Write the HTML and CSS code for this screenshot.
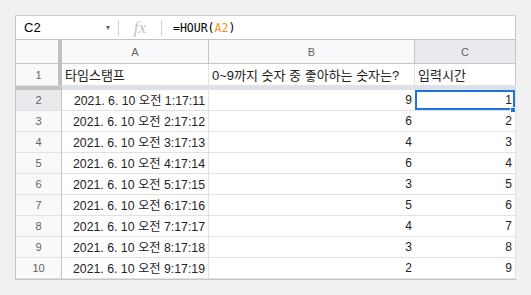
FILE: index.html
```html
<!DOCTYPE html>
<html lang="ko">
<head>
<meta charset="utf-8">
<link rel="stylesheet" href="styles.css">
</head>
<body>
<div class="sheet">
  <div class="fbar">
    <div class="namebox"><span class="ref">C2</span><span class="arrow">▾</span></div>
    <div class="sep"></div>
    <div class="fx">fx</div>
    <div class="sep"></div>
    <div class="formula">=HOUR(<span class="argref">A2</span>)</div>
  </div>
  <div class="grid">
    <div class="corner"></div>
    <div class="colh">A</div>
    <div class="colh">B</div>
    <div class="colh sel">C</div>

    <div class="rowh frozen">1</div>
    <div class="cell hdr">타임스탬프</div>
    <div class="cell hdr">0~9까지 숫자 중 좋아하는 숫자는?</div>
    <div class="cell hdr">입력시간</div>

    <div class="band"></div>

    <div class="rowh sel">2</div>
    <div class="cell num date">2021. 6. 10 오전 1:17:11</div>
    <div class="cell num">9</div>
    <div class="cell num active">1<span class="handle"></span></div>

    <div class="rowh">3</div>
    <div class="cell num date">2021. 6. 10 오전 2:17:12</div>
    <div class="cell num">6</div>
    <div class="cell num">2</div>

    <div class="rowh">4</div>
    <div class="cell num date">2021. 6. 10 오전 3:17:13</div>
    <div class="cell num">4</div>
    <div class="cell num">3</div>

    <div class="rowh">5</div>
    <div class="cell num date">2021. 6. 10 오전 4:17:14</div>
    <div class="cell num">6</div>
    <div class="cell num">4</div>

    <div class="rowh">6</div>
    <div class="cell num date">2021. 6. 10 오전 5:17:15</div>
    <div class="cell num">3</div>
    <div class="cell num">5</div>

    <div class="rowh">7</div>
    <div class="cell num date">2021. 6. 10 오전 6:17:16</div>
    <div class="cell num">5</div>
    <div class="cell num">6</div>

    <div class="rowh">8</div>
    <div class="cell num date">2021. 6. 10 오전 7:17:17</div>
    <div class="cell num">4</div>
    <div class="cell num">7</div>

    <div class="rowh">9</div>
    <div class="cell num date">2021. 6. 10 오전 8:17:18</div>
    <div class="cell num">3</div>
    <div class="cell num">8</div>

    <div class="rowh">10</div>
    <div class="cell num date">2021. 6. 10 오전 9:17:19</div>
    <div class="cell num">2</div>
    <div class="cell num">9</div>
  </div>
</div>
</body>
</html>
```

FILE: styles.css
```css
* { box-sizing: border-box; }
html, body { margin: 0; padding: 0; }
body {
  background: #f1f1f1;
  padding: 15px 0 0 15px;
  font-family: "Liberation Sans", "Noto Sans CJK KR", Arial, sans-serif;
  color: #222;
}
.sheet {
  width: 501px;
  background: #fff;
  border: 1px solid #c4c4c4;
  border-top-color: #d0d0d0;
}
.fbar {
  height: 24px;
  display: flex;
  align-items: center;
  border-bottom: 1px solid #c4c4c4;
}
.namebox {
  width: 102px;
  display: flex;
  align-items: center;
  justify-content: space-between;
  padding: 0 8px 0 8px;
  font-size: 13px;
  color: #000;
}
.arrow { font-size: 8px; color: #666; }
.sep { width: 1px; height: 16px; background: #d4d4d4; }
.fx {
  width: 42px;
  text-align: center;
  font-family: "Liberation Serif", serif;
  font-style: italic;
  font-size: 17px;
  color: #c2c2c2;
  line-height: 22px;
}
.formula {
  padding-left: 11px;
  font-family: "DejaVu Sans Mono", monospace;
  font-size: 11.5px;
  color: #000;
}
.argref { color: #f4931e; }
.grid {
  display: grid;
  grid-template-columns: 46px 147px 206px 101px;
  grid-template-rows: 24px 22px 4px repeat(9, 21px);
}
.corner {
  background: #f8f9fa;
  border-right: 4px solid #c0c0c0;
  border-bottom: 1px solid #c4c4c4;
}
.colh {
  background: #f8f9fa;
  border-right: 1px solid #c4c4c4;
  border-bottom: 1px solid #c4c4c4;
  font-size: 11px;
  color: #5f6368;
  display: flex;
  align-items: center;
  justify-content: center;
}
.colh:last-of-type { border-right: none; }
.colh.sel, .rowh.sel { background: #e8eaed; }
.rowh {
  background: #f8f9fa;
  border-right: 1px solid #c4c4c4;
  border-bottom: 1px solid #e2e2e2;
  font-size: 11px;
  color: #5f6368;
  display: flex;
  align-items: center;
  justify-content: center;
}
.rowh.frozen { border-right: 4px solid #c0c0c0; padding-left: 3px; }
.band {
  grid-column: 1 / -1;
  background: linear-gradient(to right, #c3c3c3 46px, #dde1e7 46px);
}
.cell {
  position: relative;
  border-right: 1px solid #e2e2e2;
  border-bottom: 1px solid #e2e2e2;
  display: flex;
  align-items: center;
  padding: 0 3px;
  white-space: nowrap;
  overflow: hidden;
  color: #222;
}
.cell:nth-child(4n) { border-right: none; }
.hdr { font-size: 13px; justify-content: flex-start; }
.num { font-size: 12px; justify-content: flex-end; }
.date { font-size: 12.3px; }
.active {
  overflow: visible;
  box-shadow: inset 0 0 0 2px #1a73e8;
}
.handle {
  position: absolute;
  right: -1px;
  bottom: -3px;
  width: 6px;
  height: 6px;
  background: #1a73e8;
  border: 1px solid #fff;
}
```
